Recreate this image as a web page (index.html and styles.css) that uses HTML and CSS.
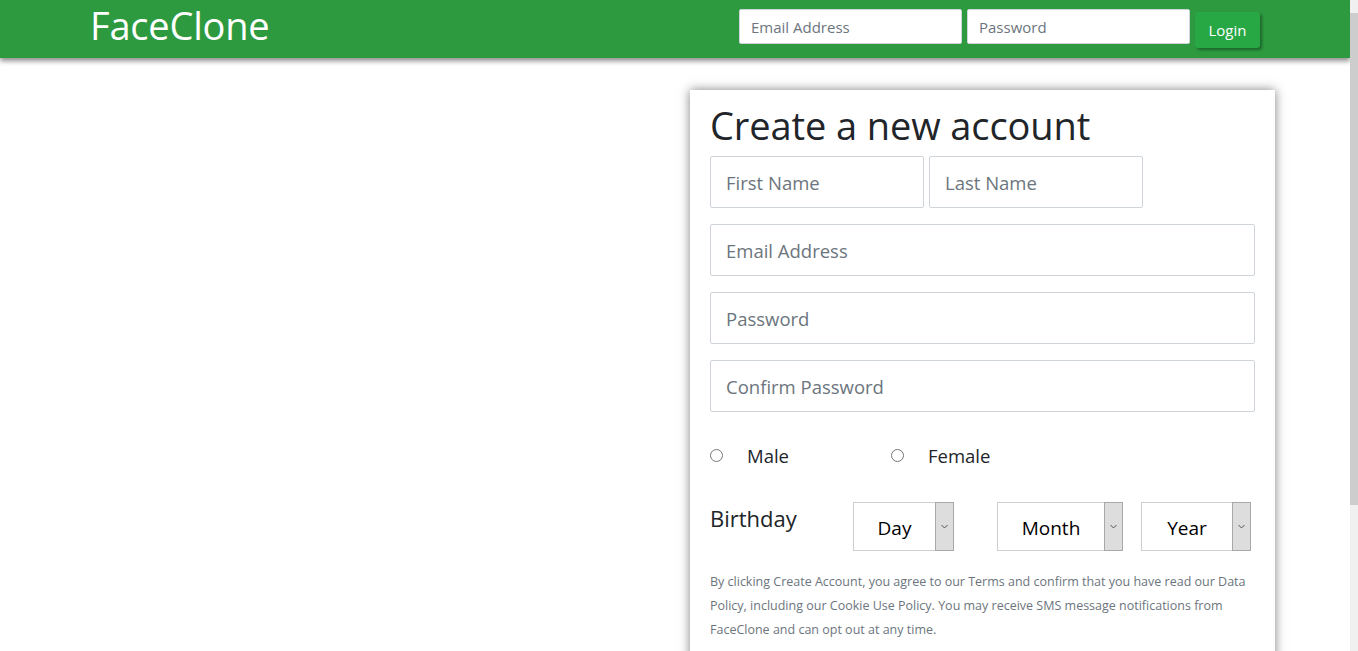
FILE: index.html
```html
<!DOCTYPE html>
<html lang="en">
<head>
<meta charset="utf-8">
<title>FaceClone</title>
<link rel="stylesheet" href="styles.css">
</head>
<body>
<div class="shell">
  <div class="page">
    <header class="topbar">
      <div class="logo">FaceClone</div>
      <form class="login">
        <input class="login-input" type="text" placeholder="Email Address">
        <input class="login-input" type="password" placeholder="Password">
        <button class="login-btn" type="button">Login</button>
      </form>
    </header>
    <main class="main">
      <section class="card">
        <h1 class="title">Create a new account</h1>
        <div class="row-names">
          <input class="field field-half" type="text" placeholder="First Name">
          <input class="field field-half" type="text" placeholder="Last Name">
        </div>
        <input class="field" type="text" placeholder="Email Address">
        <input class="field" type="password" placeholder="Password">
        <input class="field" type="password" placeholder="Confirm Password">
        <div class="gender">
          <label class="radio radio-male"><input type="radio" name="g"><span>Male</span></label>
          <label class="radio"><input type="radio" name="g"><span>Female</span></label>
        </div>
        <div class="birthday">
          <div class="bday-label">Birthday</div>
          <div class="sel sel-day"><span class="sel-text">Day</span><span class="sel-arrow"><svg width="7" height="5" viewBox="0 0 7 5"><path d="M0.5 1 L3.5 4 L6.5 1" fill="none" stroke="#555" stroke-width="1"/></svg></span></div>
          <div class="sel sel-month"><span class="sel-text">Month</span><span class="sel-arrow"><svg width="7" height="5" viewBox="0 0 7 5"><path d="M0.5 1 L3.5 4 L6.5 1" fill="none" stroke="#555" stroke-width="1"/></svg></span></div>
          <div class="sel sel-year"><span class="sel-text">Year</span><span class="sel-arrow"><svg width="7" height="5" viewBox="0 0 7 5"><path d="M0.5 1 L3.5 4 L6.5 1" fill="none" stroke="#555" stroke-width="1"/></svg></span></div>
        </div>
        <p class="terms">By clicking Create Account, you agree to our Terms and confirm that you have read our Data Policy, including our Cookie Use Policy. You may receive SMS message notifications from FaceClone and can opt out at any time.</p>
      </section>
    </main>
  </div>
  <div class="scrollbar">
    <div class="sb-arrow sb-up"></div>
    <div class="sb-thumb"></div>
    <div class="sb-track"></div>
    <div class="sb-arrow sb-down"></div>
  </div>
</div>
</body>
</html>
```

FILE: styles.css
```css
html, body {
  margin: 0;
  padding: 0;
  height: 100%;
  overflow: hidden;
  background: #fff;
}
body {
  font-family: "Open Sans", "Noto Sans", sans-serif;
  color: #212529;
}
.shell {
  display: flex;
  height: 651px;
}
.page {
  flex: 1;
  min-width: 0;
  overflow: hidden;
}
.topbar {
  height: 58px;
  background: #2d9a40;
  box-shadow: 0 3px 5px rgba(0,0,0,0.45);
  display: flex;
  justify-content: space-between;
  align-items: flex-start;
  padding: 0 90px;
  position: relative;
  z-index: 2;
}
.logo {
  color: #fff;
  font-size: 38px;
  line-height: 50px;
  letter-spacing: -0.2px;
}
.login {
  display: flex;
  align-items: flex-start;
  padding-top: 9px;
  margin: 0;
}
.login-input {
  width: 223px;
  height: 35px;
  box-sizing: border-box;
  border: 1px solid #ced4da;
  border-radius: 2px;
  padding: 0 11px;
  font-family: inherit;
  font-size: 15px;
  margin-right: 5px;
  outline: none;
}
.login-input::placeholder { color: #6c757d; }
.login-btn {
  margin-left: 0;
  margin-top: 3px;
  width: 65px;
  height: 36px;
  background: #28a745;
  color: #fff;
  border: 0;
  border-radius: 3px;
  font-family: inherit;
  font-size: 15px;
  box-shadow: 2px 2px 3px rgba(0,0,0,0.35);
}
.main {
  padding: 32px 0 0 690px;
}
.card {
  width: 585px;
  box-sizing: border-box;
  background: #fff;
  box-shadow: 0 0 10px rgba(0,0,0,0.5);
  padding: 10px 20px 40px;
  min-height: 600px;
}
.title {
  margin: 0 0 6px;
  font-weight: 400;
  font-size: 38px;
  line-height: 50px;
  letter-spacing: -0.1px;
}
.row-names {
  display: flex;
  gap: 5px;
  margin-bottom: 16px;
}
.field {
  display: block;
  width: 545px;
  height: 52px;
  box-sizing: border-box;
  border: 1px solid #ced4da;
  border-radius: 2px;
  padding: 0 15px;
  font-family: inherit;
  font-size: 18.5px;
  margin: 0 0 16px;
  outline: none;
  color: #495057;
}
.field::placeholder { color: #6c757d; }
.row-names .field { margin: 0; }
.field-half { width: 214px; }
.gender {
  display: flex;
  align-items: center;
  height: 54px;
  margin-top: 0px;
}
.radio {
  display: flex;
  align-items: center;
  font-size: 18.5px;
  color: #212529;
}
.radio input {
  width: 13px;
  height: 13px;
  margin: 0 24px 0 0;
}
.radio-male { width: 181px; }
.birthday {
  display: flex;
  align-items: flex-start;
  margin-top: 20px;
}
.bday-label {
  font-size: 22px;
  width: 143px;
  line-height: 30px;
  margin-top: 1px;
}
.sel {
  display: flex;
  height: 49px;
  box-sizing: border-box;
  border: 1px solid #cfcfcf;
  background: #fff;
}
.sel-day { width: 101px; margin-right: 43px; }
.sel-month { width: 126px; margin-right: 18px; }
.sel-year { width: 110px; }
.sel-text {
  flex: 1;
  display: flex;
  align-items: center;
  justify-content: center;
  font-size: 19px;
  color: #000;
  padding-top: 3px;
}
.sel-arrow {
  width: 17px;
  background: #dddddd;
  border: 1px solid #a9a9a9;
  margin: -1px -1px -1px 0;
  display: flex;
  align-items: center;
  justify-content: center;
}
.terms {
  margin: 19px 0 0;
  font-size: 12.5px;
  line-height: 24px;
  color: #6c757d;
}
.scrollbar {
  width: 8px;
  height: 651px;
  background: #f0f0f0;
  display: flex;
  flex-direction: column;
}
.sb-arrow { height: 12px; flex: none; }
.sb-thumb { height: 492px; background: #cdcdcd; flex: none; margin-top: 1px; }
.sb-track { flex: 1; }
```
